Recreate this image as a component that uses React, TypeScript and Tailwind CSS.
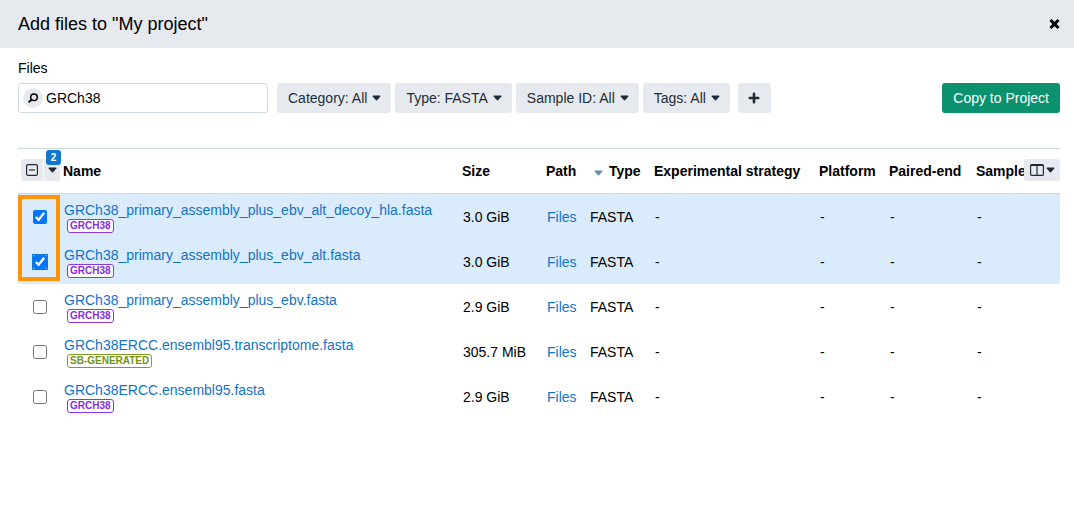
import React, { useState } from 'react';
import clsx from 'clsx';

type TagKind = 'genome' | 'generated';

interface ProjectFile {
  name: string;
  size: string;
  tag: string;
  tagKind: TagKind;
}

const FILES: ProjectFile[] = [
  { name: 'GRCh38_primary_assembly_plus_ebv_alt_decoy_hla.fasta', size: '3.0 GiB', tag: 'GRCH38', tagKind: 'genome' },
  { name: 'GRCh38_primary_assembly_plus_ebv_alt.fasta', size: '3.0 GiB', tag: 'GRCH38', tagKind: 'genome' },
  { name: 'GRCh38_primary_assembly_plus_ebv.fasta', size: '2.9 GiB', tag: 'GRCH38', tagKind: 'genome' },
  { name: 'GRCh38ERCC.ensembl95.transcriptome.fasta', size: '305.7 MiB', tag: 'SB-GENERATED', tagKind: 'generated' },
  { name: 'GRCh38ERCC.ensembl95.fasta', size: '2.9 GiB', tag: 'GRCH38', tagKind: 'genome' },
];

const FILTERS = [
  { label: 'Category', value: 'All' },
  { label: 'Type', value: 'FASTA' },
  { label: 'Sample ID', value: 'All' },
  { label: 'Tags', value: 'All' },
];

const Caret: React.FC<{ className?: string }> = ({ className }) => (
  <svg width="9" height="6" viewBox="0 0 9 6" fill="currentColor" className={className} aria-hidden="true">
    <path d="M1 .5h7a.6.6 0 0 1 .4 1L5 5.2a.7.7 0 0 1-1 0L.6 1.500A.6.6 0 0 1 1 .5z" />
  </svg>
);

const FilterSelect: React.FC<{ label: string; value: string }> = ({ label, value }) => (
  <div className="relative text-[#1f2d3a]">
    <select
      aria-label={label}
      className="block h-[30px] cursor-pointer appearance-none field-sizing-content rounded-[3px] bg-[#e6eaee] pl-[11px] pr-6 text-sm"
    >
      <option>{`${label}: ${value}`}</option>
    </select>
    <Caret className="pointer-events-none absolute right-[10px] top-3" />
  </div>
);

const Tag: React.FC<{ kind: TagKind; children: React.ReactNode }> = ({ kind, children }) => (
  <span
    className={clsx(
      'ml-[3px] block w-fit rounded-[3px] border bg-white px-[2px] text-[10px] font-bold leading-[12px]',
      kind === 'genome' ? 'border-[#8f35e8] text-[#8a2be2]' : 'border-[#7f9d20] text-[#75941a]'
    )}
  >
    {children}
  </span>
);

const App: React.FC = () => {
  const [query, setQuery] = useState('GRCh38');
  const [selected, setSelected] = useState<number[]>([0, 1]);

  const toggle = (index: number) => {
    setSelected(selected.includes(index) ? selected.filter((i) => i !== index) : [...selected, index]);
  };

  return (
    <div className="min-h-screen bg-white font-['Liberation_Sans',Arial,sans-serif] text-sm text-black">
      <header className="flex h-12 items-center justify-between bg-[#e6eaee] pl-[18px] pr-[14px]">
        <h1 className="text-lg leading-6">Add files to "My project"</h1>
        <button type="button" aria-label="Close" className="cursor-pointer">
          <svg width="11" height="10" viewBox="0 0 11 10" aria-hidden="true">
            <path d="M2.500 2l6 6M8.500 2l-6 6" stroke="currentColor" strokeWidth="2.900" strokeLinecap="square" />
          </svg>
        </button>
      </header>

      <main className="pl-[18px] pr-[14px] pt-[10px]">
        <label htmlFor="file-search" className="block leading-5">
          Files
        </label>

        {/* Search and filters */}
        <div className="mt-[5px] flex items-center">
          <div className="flex h-[30px] w-[250px] items-center rounded-[3px] border border-[#cdd9e3] pl-1">
            <span className="flex size-5 shrink-0 items-center justify-center rounded-full bg-[#e6eaee]">
              <svg width="12" height="12" viewBox="0 0 12 12" fill="none" stroke="currentColor" aria-hidden="true">
                <circle cx="7" cy="5.200" r="3.300" strokeWidth="1.500" />
                <path d="M4.500 7.700L2.200 9.800" strokeWidth="1.900" strokeLinecap="round" />
              </svg>
            </span>
            <input
              id="file-search"
              type="text"
              value={query}
              onChange={(e) => setQuery(e.target.value)}
              className="min-w-0 flex-1 pl-[3px] outline-none"
            />
          </div>
          <div className="ml-[9px] flex gap-1">
            {FILTERS.map((filter) => (
              <FilterSelect key={filter.label} {...filter} />
            ))}
          </div>
          <button
            type="button"
            aria-label="Add filter"
            className="ml-2 flex h-[30px] w-[33px] cursor-pointer items-center justify-center rounded-[3px] bg-[#e6eaee] text-[#1f2d3a]"
          >
            <svg width="12" height="12" viewBox="0 0 12 12" aria-hidden="true">
              <path d="M6 1.800v8.400M1.800 6h8.400" stroke="currentColor" strokeWidth="2.600" strokeLinecap="round" />
            </svg>
          </button>
          <button type="button" className="ml-auto h-[30px] cursor-pointer rounded-[3px] bg-[#0b916e] px-[11px] text-white">
            Copy to Project
          </button>
        </div>

        {/* File table */}
        <div className="relative mt-[35px] border-t border-[#cdd9e3]">
          <table className="w-full table-fixed border-separate border-spacing-0 text-left">
            <thead>
              <tr className="h-[45px] whitespace-nowrap [&>th]:border-b [&>th]:border-[#cdd9e3] [&>th]:p-0">
                <th scope="col" className="w-[45px]">
                  <div className="relative mb-[2px] ml-[3px] flex h-[22px] w-[39px] gap-px text-[#1f2d3a]">
                    <button
                      type="button"
                      aria-label="Deselect all"
                      className="flex w-[22px] cursor-pointer items-center justify-center rounded-l-[3px] bg-[#e6eaee]"
                    >
                      <svg width="12" height="12" viewBox="0 0 12 12" fill="none" stroke="currentColor" aria-hidden="true">
                        <rect x=".6" y=".6" width="10.800" height="10.800" rx="1.500" strokeWidth="1.200" />
                        <path d="M3 6h6" strokeWidth="1.200" />
                      </svg>
                    </button>
                    <button
                      type="button"
                      aria-label="Selection options"
                      aria-haspopup="menu"
                      className="flex w-4 cursor-pointer items-center justify-center rounded-r-[3px] bg-[#e6eaee]"
                    >
                      <Caret />
                    </button>
                    <span className="absolute -right-px -top-[9px] flex h-[15px] w-[15px] items-center justify-center rounded-[3px] bg-[#1277cd] text-[10px] font-bold leading-none text-white">
                      {selected.length}
                    </span>
                  </div>
                </th>
                <th scope="col">Name</th>
                <th scope="col" className="w-[84px]">Size</th>
                <th scope="col" className="w-[43px]">Path</th>
                <th scope="col" className="w-[65px]">
                  <span className="flex items-center gap-[6px] pl-[5px]">
                    <Caret className="mt-1 text-[#6590b5]" />
                    Type
                  </span>
                </th>
                <th scope="col" className="w-[165px]">Experimental strategy</th>
                <th scope="col" className="w-[70px]">Platform</th>
                <th scope="col" className="w-[87px]">Paired-end</th>
                <th scope="col" className="w-[84px]">Sample</th>
              </tr>
            </thead>
            <tbody>
              {FILES.map((file, index) => (
                <tr
                  key={file.name}
                  className={clsx('h-[45px] [&>td]:p-0 [&>td]:pl-px', selected.includes(index) && 'bg-[#daebfb]')}
                >
                  <td>
                    <input
                      type="checkbox"
                      aria-label={`Select ${file.name}`}
                      checked={selected.includes(index)}
                      onChange={() => toggle(index)}
                      className={clsx(
                        'ml-[14px] block size-[14px] accent-[#0075ff]',
                        index === 1 && 'bg-[#1277cd] outline-1 outline-[#1277cd]'
                      )}
                    />
                  </td>
                  <td>
                    <a href="#" className="block leading-[18px] text-[#1473c8]">{file.name}</a>
                    <Tag kind={file.tagKind}>{file.tag}</Tag>
                  </td>
                  <td>{file.size}</td>
                  <td>
                    <a href="#" className="text-[#1277cd]">Files</a>
                  </td>
                  <td>FASTA</td>
                  <td>-</td>
                  <td>-</td>
                  <td>-</td>
                  <td>-</td>
                </tr>
              ))}
            </tbody>
          </table>

          <button
            type="button"
            aria-label="Choose columns"
            aria-haspopup="menu"
            className="absolute right-0 top-[10px] flex h-[22px] w-9 cursor-pointer items-center justify-center gap-[2px] rounded-[3px] bg-[#e6eaee] text-[#1f2d3a]"
          >
            <svg width="14" height="12" viewBox="0 0 14 12" fill="none" stroke="currentColor" aria-hidden="true">
              <rect x=".6" y=".6" width="12.800" height="10.800" rx="1" strokeWidth="1.200" />
              <path d="M7 1v10M1 1.300h12" strokeWidth="1.200" />
            </svg>
            <Caret />
          </button>

          {/* Highlight around the selected rows' checkboxes */}
          <div className="pointer-events-none absolute left-0 top-[46px] h-[86px] w-[42px] border-4 border-[#ff9408]" />
        </div>
      </main>
    </div>
  );
};

export default App;
